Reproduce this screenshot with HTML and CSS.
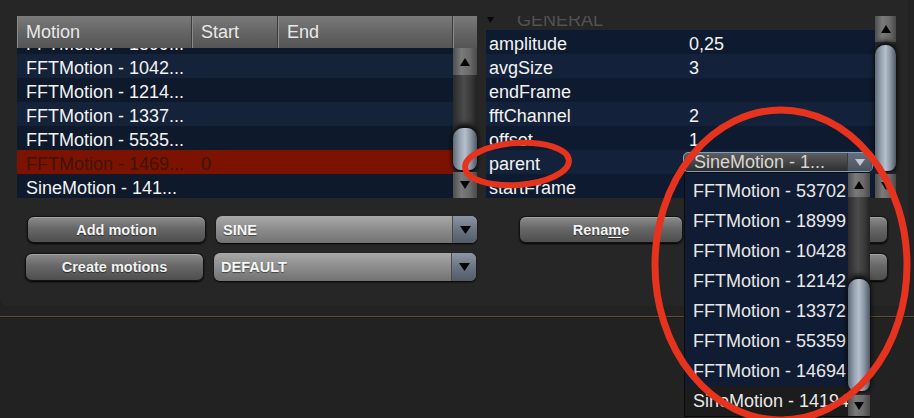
FILE: index.html
```html
<!DOCTYPE html>
<html>
<head>
<meta charset="utf-8">
<title>Motions</title>
<link rel="stylesheet" href="styles.css">
</head>
<body>
<div class="panel">
  <div class="left">
    <div class="table">
      <div class="thead">
        <div class="th c-motion">Motion</div>
        <div class="th c-start">Start</div>
        <div class="th c-end">End</div>
        <div class="th c-corner"></div>
      </div>
      <div class="tbody">
        <div class="rows">
          <div class="rows-inner">
            <div class="row dk"><span class="c-motion">FFTMotion - 1899...</span></div>
            <div class="row lt"><span class="c-motion">FFTMotion - 1042...</span></div>
            <div class="row dk"><span class="c-motion">FFTMotion - 1214...</span></div>
            <div class="row lt"><span class="c-motion">FFTMotion - 1337...</span></div>
            <div class="row dk"><span class="c-motion">FFTMotion - 5535...</span></div>
            <div class="row sel"><span class="c-motion">FFTMotion - 1469...</span><span class="c-start">0</span></div>
            <div class="row dk"><span class="c-motion">SineMotion - 141...</span></div>
          </div>
        </div>
        <div class="sb sb-left">
          <div class="sb-btn up"><svg width="10" height="8" viewBox="0 0 10 8"><polygon points="5,0 10,8 0,8" fill="#050505"/></svg></div>
          <div class="sb-track"><div class="sb-thumb"></div></div>
          <div class="sb-btn down"><svg width="10" height="8" viewBox="0 0 10 8"><polygon points="0,0 10,0 5,8" fill="#050505"/></svg></div>
        </div>
      </div>
    </div>
    <div class="controls">
      <div class="ctl-row r1">
        <button class="btn">Add motion</button>
        <div class="dd"><span class="dd-text">SINE</span><span class="dd-arrow"><svg width="11" height="8" viewBox="0 0 11 8"><polygon points="0,0 11,0 5.5,8" fill="#050505"/></svg></span></div>
      </div>
      <div class="ctl-row r2">
        <button class="btn">Create motions</button>
        <div class="dd wide"><span class="dd-text">DEFAULT</span><span class="dd-arrow"><svg width="11" height="8" viewBox="0 0 11 8"><polygon points="0,0 11,0 5.5,8" fill="#050505"/></svg></span></div>
      </div>
    </div>
  </div>

  <div class="right">
    <div class="props">
      <div class="pview">
        <div class="pinner">
          <div class="section"><svg class="sec-tri" width="7" height="6" viewBox="0 0 7 6"><polygon points="0,0 7,0 3.5,6" fill="#080808"/></svg><span class="sec-title">GENERAL</span></div>
          <div class="prow dk"><span class="pname">amplitude</span><span class="pval">0,25</span></div>
          <div class="prow lt"><span class="pname">avgSize</span><span class="pval">3</span></div>
          <div class="prow dk"><span class="pname">endFrame</span><span class="pval"></span></div>
          <div class="prow lt"><span class="pname">fftChannel</span><span class="pval">2</span></div>
          <div class="prow dk"><span class="pname">offset</span><span class="pval">1</span></div>
          <div class="prow lt"><span class="pname">parent</span>
            <div class="combo"><span class="combo-text">SineMotion - 1...</span><span class="combo-arrow"><svg width="10" height="7" viewBox="0 0 10 7"><polygon points="0,0 10,0 5,7" fill="#c4c8ce"/></svg></span></div>
          </div>
          <div class="prow dk"><span class="pname">startFrame</span><span class="pval"></span></div>
        </div>
      </div>
      <div class="sb sb-right">
        <div class="sb-btn up"><svg width="10" height="8" viewBox="0 0 10 8"><polygon points="5,0 10,8 0,8" fill="#050505"/></svg></div>
        <div class="sb-track"><div class="sb-thumb"></div></div>
        <div class="sb-btn down"><svg width="10" height="8" viewBox="0 0 10 8"><polygon points="0,0 10,0 5,8" fill="#050505"/></svg></div>
      </div>
    </div>
    <div class="controls rctl">
      <div class="ctl-row r1">
        <button class="btn rename">Rena<u>m</u>e</button>
        <button class="btn side"></button>
      </div>
      <div class="ctl-row r2">
        <button class="btn side"></button>
      </div>
    </div>
  </div>
</div>
<div class="rule"></div>

<div class="popup">
  <div class="plist">
    <div class="pitem">FFTMotion - 53702</div>
    <div class="pitem">FFTMotion - 18999</div>
    <div class="pitem">FFTMotion - 10428</div>
    <div class="pitem">FFTMotion - 12142</div>
    <div class="pitem">FFTMotion - 13372</div>
    <div class="pitem">FFTMotion - 55359</div>
    <div class="pitem">FFTMotion - 14694</div>
    <div class="pitem last">SineMotion - 14194</div>
  </div>
  <div class="sb sb-pop">
    <div class="sb-btn up"><svg width="10" height="8" viewBox="0 0 10 8"><polygon points="5,0 10,8 0,8" fill="#050505"/></svg></div>
    <div class="sb-track"><div class="sb-thumb"></div></div>
    <div class="sb-btn down"><svg width="10" height="8" viewBox="0 0 10 8"><polygon points="0,0 10,0 5,8" fill="#050505"/></svg></div>
  </div>
</div>

<svg class="annot" width="914" height="418" viewBox="0 0 914 418">
  <ellipse cx="517" cy="164" rx="52" ry="21" transform="rotate(-4 517 164)" fill="none" stroke="#e6331d" stroke-width="6"/>
  <ellipse cx="781" cy="265" rx="126" ry="155" fill="none" stroke="#e6331d" stroke-width="7"/>
</svg>
</body>
</html>
```

FILE: styles.css
```css
html, body {
  margin: 0;
  padding: 0;
}
body {
  width: 914px;
  height: 418px;
  overflow: hidden;
  position: relative;
  background: #222222;
  font-family: "Liberation Sans", Arial, sans-serif;
  color: #f0f0f0;
}

.panel {
  height: 306px;
  margin-right: 6px;
  box-sizing: border-box;
  padding: 16px 0 0 17px;
  background: #262626;
  border-radius: 0 0 8px 8px;
  display: flex;
  gap: 9px;
}

/* ---------- left table ---------- */
.left {
  width: 460px;
  flex: none;
}
.table {
  height: 182px;
  display: flex;
  flex-direction: column;
}
.thead {
  height: 32px;
  display: flex;
  background: linear-gradient(#7a7a7a, #636363 55%, #555555);
  color: #e8e8e8;
  font-size: 18px;
  line-height: 33px;
}
.th {
  box-sizing: border-box;
  padding-left: 9px;
  border-right: 1px solid #3c3c3c;
  box-shadow: inset 1px 0 0 #8a8a8a;
  white-space: nowrap;
}
.c-motion { width: 175px; }
.c-start { width: 86px; }
.c-end { width: 175px; }
.c-corner { width: 24px; border-right: none; }

.tbody {
  height: 150px;
  display: flex;
}
.rows {
  width: 436px;
  overflow: hidden;
}
.rows-inner {
  margin-top: -18px;
}
.row {
  height: 24px;
  box-sizing: border-box;
  padding-top: 4px;
  display: flex;
  font-size: 18px;
  line-height: 20px;
  white-space: nowrap;
  color: #f3f3f3;
}
.row span {
  box-sizing: border-box;
  padding-left: 9px;
  flex: none;
}
.row.dk { background: #0e192b; }
.row.lt { background: #14223a; }
.row.sel { background: #7b1300; color: #3f1409; }

/* ---------- scrollbars ---------- */
.sb {
  flex: none;
  display: flex;
  flex-direction: column;
  background: #2c2c2c;
}
.sb-btn {
  flex: none;
  display: flex;
  align-items: center;
  justify-content: center;
  background: linear-gradient(90deg, #4e4e4e, #7a7a7a 35%, #6a6a6a 70%, #484848);
}
.sb-track {
  flex: 1;
  display: flex;
  flex-direction: column;
  background: linear-gradient(90deg, #2a2a2a, #4c4c4c 45%, #3a3a3a 75%, #222222);
}
.sb-thumb {
  flex: none;
  border-radius: 10px 10px 8px 8px;
  background: linear-gradient(90deg, #5f6977, #9aa6b4 30%, #b6c0cc 50%, #8893a2 75%, #4f5763);
  box-shadow: 0 -4px 5px #0c0c0c, 0 3px 4px #0c0c0c;
}

.sb-left { width: 24px; }
.sb-left .up { height: 27px; }
.sb-left .down { height: 26px; }
.sb-left .sb-thumb { margin-top: 53px; height: 42px; }

.sb-right { width: 21px; height: 182px; }
.sb-right .up { height: 26px; }
.sb-right .down { height: 24px; }
.sb-right .sb-thumb { margin-top: 3px; height: 126px; }

.sb-pop { width: 22px; }
.sb-pop .up { height: 24px; }
.sb-pop .down { height: 21px; }
.sb-pop .sb-thumb { margin-top: 82px; height: 112px; }

/* ---------- buttons / dropdowns ---------- */
.controls {
  margin-top: 18px;
  display: flex;
  flex-direction: column;
  gap: 10px;
}
.ctl-row {
  display: flex;
  gap: 10px;
  height: 27px;
}
.ctl-row.r2 { height: 28px; }
.left .r1 { padding-left: 10px; }
.left .r2 { padding-left: 8px; }

.btn {
  flex: none;
  width: 179px;
  height: 100%;
  box-sizing: border-box;
  border: 1px solid #121212;
  border-radius: 7px;
  background: linear-gradient(#8c8c8c, #686868 45%, #4e4e4e);
  box-shadow: inset 0 1px 0 #a4a4a4, 0 1px 2px #000;
  color: #f2f2f2;
  font-family: "Liberation Sans", Arial, sans-serif;
  font-weight: bold;
  font-size: 14.5px;
  text-shadow: 0 1px 1px #2a2a2a;
  padding: 0;
}
.btn u { text-decoration-thickness: 1px; text-underline-offset: 2px; }

.dd {
  flex: none;
  width: 261px;
  height: 100%;
  box-sizing: border-box;
  display: flex;
  justify-content: space-between;
  border-radius: 6px;
  background: linear-gradient(#a9a9a9, #8c8c8c 50%, #727272);
  box-shadow: 0 1px 2px #000;
  color: #f6f6f6;
  font-weight: bold;
  font-size: 14.5px;
  text-shadow: 0 1px 1px #444;
}
.dd.wide { width: 262px; }
.dd-text {
  padding-left: 7px;
  align-self: center;
}
.dd-arrow {
  width: 24px;
  display: flex;
  align-items: center;
  justify-content: center;
  border-left: 1px solid #4a4a4a;
  border-radius: 0 6px 6px 0;
  background: linear-gradient(#8c96a4, #6a7482 50%, #525b68);
}

/* ---------- right properties ---------- */
.right {
  width: 410px;
  flex: none;
}
.props {
  display: flex;
  height: 182px;
}
.pview {
  width: 389px;
  height: 182px;
  overflow: hidden;
}
.pinner { margin-top: -10px; }
.section {
  height: 24px;
  box-sizing: border-box;
  padding-top: 4px;
  display: flex;
  align-items: flex-start;
  font-size: 18px;
  line-height: 20px;
  color: #525252;
}
.sec-tri {
  margin: 7px 0 0 1px;
  flex: none;
}
.sec-title { margin-left: 23px; }

.prow {
  height: 24px;
  box-sizing: border-box;
  padding-top: 4px;
  display: flex;
  font-size: 18px;
  line-height: 20px;
  color: #f3f3f3;
  white-space: nowrap;
}
.prow.dk { background: #0e1a30; }
.prow.lt { background: #13223a; }
.pname {
  width: 197px;
  box-sizing: border-box;
  padding-left: 3px;
  flex: none;
}
.pval { padding-left: 6px; }

.combo {
  flex: none;
  margin-top: -2px;
  width: 190px;
  height: 20px;
  box-sizing: border-box;
  display: flex;
  justify-content: space-between;
  border: 1px solid #7d9fc8;
  border-radius: 5px;
  background: linear-gradient(#5e5e5e, #444 55%, #2e2e2e);
  line-height: 18px;
  color: #d6d6d6;
  overflow: hidden;
}
.combo-text { padding-left: 10px; }
.combo-arrow {
  width: 24px;
  display: flex;
  align-items: center;
  justify-content: center;
  background: linear-gradient(#66707c, #4a525e);
  border-left: 1px solid #3a3a3a;
}

.rctl .r1 { padding-left: 33px; gap: 41px; }
.rctl .r2 { padding-left: 238px; }
.btn.rename { width: 164px; }
.btn.side { width: 164px; }

/* ---------- bottom rule ---------- */
.rule {
  margin-top: 10px;
  height: 1px;
  background: #5f4d2f;
  border-bottom: 1px solid #1a1a1a;
}

/* ---------- popup list (overlay) ---------- */
.popup {
  position: absolute;
  left: 684px;
  top: 172px;
  width: 186px;
  height: 245px;
  box-sizing: border-box;
  border: 1px solid #0b0b0b;
  background: #0f1c33;
  display: flex;
}
.plist {
  width: 163px;
  flex: none;
  padding-top: 3px;
  overflow: hidden;
}
.pitem {
  height: 30px;
  padding-left: 8px;
  font-size: 18px;
  line-height: 30px;
  color: #e8e8e8;
  white-space: nowrap;
}
.pitem.last { background: #1c1c1c; }
.sb-pop { height: 243px; }

/* ---------- annotation overlay ---------- */
.annot {
  position: absolute;
  left: 0;
  top: 0;
  pointer-events: none;
}
```
